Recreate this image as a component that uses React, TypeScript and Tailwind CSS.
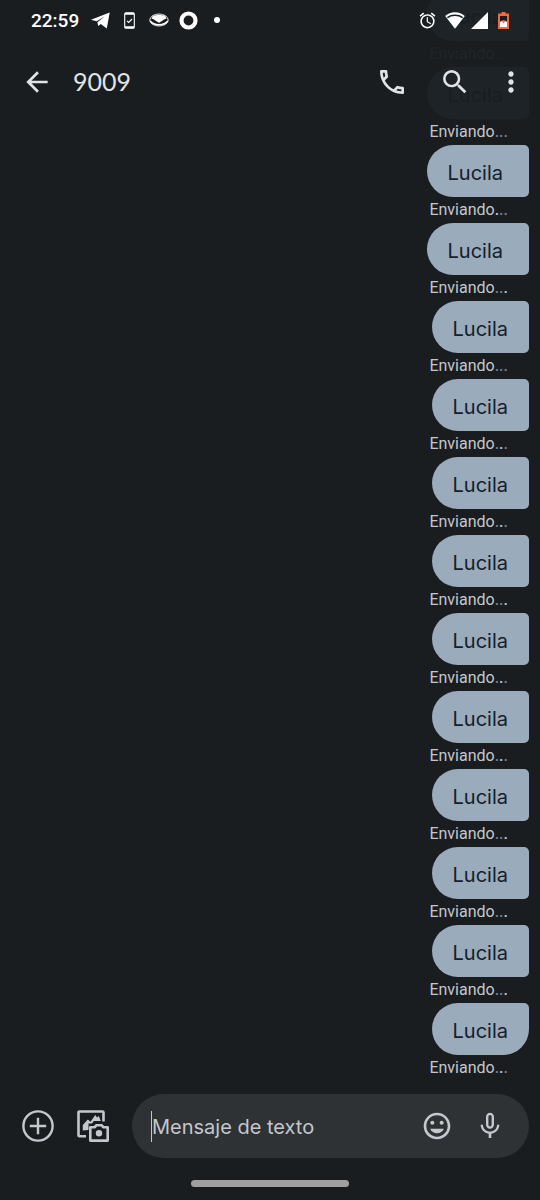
import {
  MdAlarm,
  MdArrowBack,
  MdInsertEmoticon,
  MdMicNone,
  MdMoreVert,
  MdOutlinePhone,
  MdSearch,
} from "react-icons/md";
import { clsx } from "clsx";

interface Message {
  text: string;
  trailingSpace: boolean;
  // Which of the three "sending" dots is lit, if any
  activeDot: number | null;
}

const messages: Message[] = [
  { text: "Lucila", trailingSpace: true, activeDot: null },
  { text: "Lucila", trailingSpace: true, activeDot: null },
  { text: "Lucila", trailingSpace: true, activeDot: 0 },
  { text: "Lucila", trailingSpace: true, activeDot: 2 },
  { text: "Lucila", trailingSpace: false, activeDot: null },
  { text: "Lucila", trailingSpace: false, activeDot: 1 },
  { text: "Lucila", trailingSpace: false, activeDot: 1 },
  { text: "Lucila", trailingSpace: false, activeDot: 2 },
  { text: "Lucila", trailingSpace: false, activeDot: 1 },
  { text: "Lucila", trailingSpace: false, activeDot: 1 },
  { text: "Lucila", trailingSpace: false, activeDot: 2 },
  { text: "Lucila", trailingSpace: false, activeDot: 2 },
  { text: "Lucila", trailingSpace: false, activeDot: 2 },
  { text: "Lucila", trailingSpace: false, activeDot: 1 },
];

function StatusBar() {
  return (
    <div className="flex h-10 items-center justify-between pr-[31px] pl-[31px] text-white">
      <div className="flex items-center">
        <time className="mr-3 pt-[2px] font-['Roboto',sans-serif] text-[19px] font-medium">22:59</time>
        <svg className="mr-[14px] h-[17px] w-[19px]" viewBox="0 0 19 16" fill="currentColor">
          <path d="M18.7 0 15.8 16 9.8 11.4 7.2 13.6 6.4 9.8 13.6 4 5.6 8.8 0 7.2Z" />
        </svg>
        <svg className="mr-[14px] h-[17px] w-[11px]" viewBox="0 0 11 17" fill="none" stroke="currentColor">
          <rect x="0.7" y="0.7" width="9.6" height="15.6" rx="1.4" strokeWidth="1.1" />
          <path d="M1 1.8h9M1 15.2h9" strokeWidth="2" />
          <path d="m3 8.8 1.7 1.6L8 7" strokeWidth="1.1" />
        </svg>
        <svg className="mr-[10px] h-[14px] w-5" viewBox="0 0 20 14" fill="none" stroke="currentColor">
          <ellipse cx="10" cy="7" rx="9.2" ry="6" strokeWidth="0.9" />
          <path
            d="M3.5 3.2C6 1.8 8 2.6 10 1.8c2 .8 4-.2 6.500 1.400l1 2.200c-2 .6-3.200 1.200-4.500 2.600-1 .8-2 .8-3 2-1-1.200-2-1.200-3-2C5.700 6.600 4.500 6 2.500 5.400Z"
            fill="currentColor"
            stroke="none"
          />
          <path d="M1.2 8c3.800 5 13.800 5 17.600 0" strokeWidth="1.6" />
        </svg>
        <svg className="mr-4 h-[19px] w-[19px]" viewBox="0 0 19 19" fill="none" stroke="currentColor">
          <circle cx="9.5" cy="9.5" r="7" strokeWidth="4.2" />
        </svg>
        <span className="h-[6px] w-[6px] rounded-full bg-white" />
      </div>
      <div className="flex items-center">
        <MdAlarm className="mr-2 h-[19px] w-[19px]" />
        <svg className="mr-[6px] h-[17px] w-5" viewBox="0 0 20 17" fill="currentColor">
          <path d="M10 .3C6.1.3 2.7 1.7.2 4L10 16.7 19.8 4C17.3 1.7 13.9.3 10 .3Z" />
          <path d="M2.4 5.6C6.6 2.5 13.4 2.5 17.6 5.6" fill="none" stroke="#191d20" strokeWidth="1.5" />
        </svg>
        <svg className="mr-[10px] h-[17px] w-[17px]" viewBox="0 0 17 17" fill="currentColor">
          <path d="M17 0v17H0Z" />
        </svg>
        <svg className="h-[17px] w-[11px]" viewBox="0 0 11 17">
          <path d="M3.5 0h4v1.6H11V17H0V1.6h3.5Z" fill="#f4693c" />
          <path d="M2 4h7v5.5L5.5 8 2 9.5Z" fill="#191d20" />
          <path d="M2 10.2 4 9l1.5 2.5L7.2 9 9 10.2V15H2Z" fill="#fff" />
        </svg>
      </div>
    </div>
  );
}

function Header() {
  return (
    <header className="absolute inset-x-0 top-0 h-[120px] bg-[#191d20]/96 text-[#e1e3e6]">
      <StatusBar />
      <div className="flex h-[84px] items-center pr-[13px] pl-[21px]">
        <button aria-label="Atrás" className="mr-5">
          <MdArrowBack className="h-8 w-8" />
        </button>
        <h1 className="flex-1 font-['Lato',sans-serif] text-[25px]">9009</h1>
        <button aria-label="Llamar" className="mr-[31px]">
          <MdOutlinePhone className="h-8 w-8" />
        </button>
        <button aria-label="Buscar" className="mr-6">
          <MdSearch className="h-8 w-8" />
        </button>
        <button aria-label="Más opciones">
          <MdMoreVert className="h-8 w-8" />
        </button>
      </div>
    </header>
  );
}

function MessageItem({ message, last }: { message: Message; last: boolean }) {
  return (
    <li className="flex shrink-0 flex-col items-end">
      <p
        className={clsx(
          "flex h-[52px] items-center rounded-l-[26px] rounded-tr-[5px] bg-[#9aabbc] pt-[3px] pl-[21px] text-[20px] text-[#15202b]",
          message.trailingSpace ? "pr-[26px]" : "pr-[21px]",
          last ? "rounded-br-[26px]" : "rounded-br-[5px]",
        )}
      >
        {message.text}
      </p>
      <p className="flex h-[26px] items-center pr-[21px] font-['Roboto',sans-serif] text-[16px] text-[#c3c7cb]">
        Enviando
        {[0, 1, 2].map((dot) => (
          <span
            key={dot}
            className={clsx("font-medium", dot === message.activeDot ? "text-[#b4c6d8]" : "text-[#74818d]")}
          >
            .
          </span>
        ))}
      </p>
    </li>
  );
}

function AddIcon() {
  return (
    <svg className="h-8 w-8" viewBox="0 0 32 32" fill="none" stroke="currentColor" strokeWidth="2.4">
      <circle cx="16" cy="16" r="14.6" />
      <path d="M16 7.8v16.400M7.800 16h16.400" />
    </svg>
  );
}

function GalleryIcon() {
  return (
    <svg className="h-8 w-8" viewBox="0 0 32 32" fill="none" stroke="currentColor" strokeWidth="2.6">
      <path d="M9 26.300H2.500a1 1 0 0 1-1-1V2.500a1 1 0 0 1 1-1h23a1 1 0 0 1 1 1V11.500" />
      <path d="M5.800 20.500v-5.500l5-5.500 2.700 2.200 4.800-6.700 1.700 2.500 1.800-1.500 2 5h-7l-1.800 2.500h-3.500v6.500Z" fill="currentColor" stroke="none" />
      <path d="M13.300 17.300h4.200l1.700-2h5.600l1.700 2h4.200v13.300H13.300Z" strokeLinejoin="round" />
      <circle cx="22" cy="23.300" r="3.200" fill="currentColor" stroke="none" />
    </svg>
  );
}

function Composer() {
  return (
    <form className="flex items-center pr-[11px] pl-[22px] text-[#c4c7cd]" onSubmit={(e) => e.preventDefault()}>
      <button type="button" aria-label="Adjuntar" className="mr-[23px]">
        <AddIcon />
      </button>
      <button type="button" aria-label="Galería" className="mr-[23px]">
        <GalleryIcon />
      </button>
      <div className="flex h-16 min-w-0 flex-1 items-center rounded-full bg-[#2e3235] pr-[23px] pl-[19px]">
        <span className="h-[31px] w-px shrink-0 bg-[#c4c7cd]" />
        <input
          type="text"
          aria-label="Mensaje de texto"
          placeholder="Mensaje de texto"
          className="h-12 min-w-0 flex-1 pt-[2px] text-[20px] outline-none placeholder:text-[#c4c7cd]"
        />
        <button type="button" aria-label="Emojis" className="mr-[21px]">
          <MdInsertEmoticon className="h-8 w-8" />
        </button>
        <button type="button" aria-label="Grabar audio">
          <MdMicNone className="h-8 w-8" />
        </button>
      </div>
    </form>
  );
}

export default function App() {
  return (
    <div className="relative flex h-screen flex-col bg-[#191d20] font-['Inter',sans-serif]">
      <main className="flex min-h-0 flex-1 flex-col overflow-hidden pr-[11px] pb-[13px]">
        <ul className="flex min-h-0 flex-1 flex-col justify-end">
          {messages.map((message, index) => (
            <MessageItem key={index} message={message} last={index === messages.length - 1} />
          ))}
        </ul>
      </main>
      <Header />
      <Composer />
      <div className="flex h-[42px] justify-center pt-[22px]">
        <span className="h-[7px] w-[158px] rounded-full bg-[#a0a0a0]" />
      </div>
    </div>
  );
}
